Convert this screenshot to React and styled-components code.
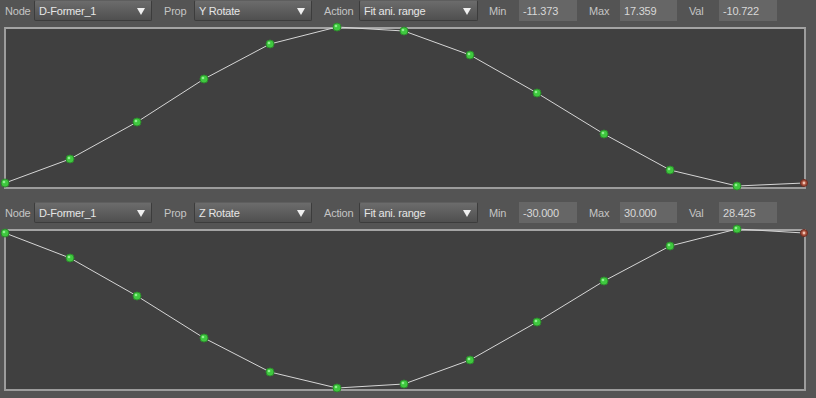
import React from "react";
import styled, { createGlobalStyle } from "styled-components";

const GlobalStyle = createGlobalStyle`
  html, body {
    margin: 0;
    padding: 0;
    background: #545454;
  }
  body {
    font-family: "Liberation Sans", Arial, sans-serif;
    font-size: 11px;
    color: #cfcfcf;
  }
`;

const Page = styled.div`
  width: 816px;
  height: 398px;
  overflow: hidden;
  background: #545454;
`;

const Channel = styled.section`
  display: flex;
  flex-direction: column;
  margin-bottom: 13px;
`;

const Toolbar = styled.div`
  display: flex;
  align-items: stretch;
  height: 22px;
  padding-left: 0;
  margin-bottom: 5px;
`;

const Field = styled.div`
  display: flex;
  align-items: stretch;
  background: ${(p) => (p.$boxed ? "#585858" : "transparent")};
`;

const Label = styled.span`
  display: flex;
  align-items: center;
  box-sizing: border-box;
  width: ${(p) => p.$w}px;
  padding-left: ${(p) => p.$pad}px;
  color: #c4c4c4;
  letter-spacing: -0.2px;
  white-space: nowrap;
`;

const Select = styled.div`
  display: flex;
  align-items: center;
  justify-content: space-between;
  box-sizing: border-box;
  width: ${(p) => p.$w}px;
  height: 21px;
  padding: 0 6px 0 4px;
  border: 1px solid #3c3c3c;
  border-top-color: #5e5e5e;
  border-radius: 2px;
  background: linear-gradient(#6c6c6c, #4f4f4f);
  color: #e6e6e6;
  letter-spacing: -0.2px;
`;

const Arrow = styled.span`
  width: 0;
  height: 0;
  border-left: 4px solid transparent;
  border-right: 4px solid transparent;
  border-top: 7px solid #f0f0f0;
  margin-top: 1px;
`;

const NumBox = styled.div`
  display: flex;
  align-items: center;
  box-sizing: border-box;
  width: ${(p) => p.$w}px;
  height: 21px;
  padding-left: 4px;
  background: #666666;
  color: #d8d8d8;
  letter-spacing: -0.2px;
`;

const Frame = styled.div`
  position: relative;
  box-sizing: border-box;
  width: 802px;
  height: 162px;
  margin-left: 4px;
  border: 2px solid #9c9c9c;
  border-top-color: #a4a4a4;
  background: #404040;
`;

const Plot = styled.svg`
  display: block;
  width: 100%;
  height: 100%;
  overflow: visible;
`;

const XS = [-1, 64, 131, 198, 264, 331, 398, 464, 531, 598, 664, 731, 798];

const channels = [
  {
    prop: "Y Rotate",
    min: "-11.373",
    max: "17.359",
    val: "-10.722",
    ys: [154, 130, 93, 50, 15, -2, 2, 26, 64, 105, 141, 157, 154],
  },
  {
    prop: "Z Rotate",
    min: "-30.000",
    max: "30.000",
    val: "28.425",
    ys: [2, 27, 65, 107, 141, 157, 153, 129, 91, 50, 15, -2, 2],
  },
];

const Curve = ({ ys }) => {
  const pts = XS.map((x, i) => [x, ys[i]]);
  const last = pts.length - 1;
  return (
    <Plot>
      <polyline
        points={pts.map((p) => p.join(",")).join(" ")}
        fill="none"
        stroke="#d6d6d6"
        strokeWidth="1"
      />
      {pts.map(([x, y], i) =>
        i === last ? (
          <g key={i}>
            <circle cx={x} cy={y} r="3.5" fill="#a8503c" stroke="#6a2a20" strokeWidth="1" />
            <circle cx={x} cy={y} r="1.4" fill="#f0c0b0" />
          </g>
        ) : (
          <g key={i}>
            <circle cx={x} cy={y} r="4" fill="#3fc83f" stroke="#2c8a2c" strokeWidth="1" />
            <circle cx={x - 1} cy={y - 1} r="1.3" fill="#8ef08e" />
          </g>
        )
      )}
    </Plot>
  );
};

const ChannelView = ({ c }) => (
  <Channel>
    <Toolbar>
      <Field>
        <Label $w={34} $pad={5}>Node</Label>
        <Select $w={118}>
          D-Former_1
          <Arrow />
        </Select>
      </Field>
      <Field>
        <Label $w={42} $pad={12}>Prop</Label>
        <Select $w={118}>
          {c.prop}
          <Arrow />
        </Select>
      </Field>
      <Field>
        <Label $w={47} $pad={12}>Action</Label>
        <Select $w={119}>
          Fit ani. range
          <Arrow />
        </Select>
      </Field>
      <Field>
        <Label $w={41} $pad={11}>Min</Label>
        <NumBox $w={58}>{c.min}</NumBox>
      </Field>
      <Field>
        <Label $w={43} $pad={12}>Max</Label>
        <NumBox $w={57}>{c.max}</NumBox>
      </Field>
      <Field>
        <Label $w={42} $pad={12}>Val</Label>
        <NumBox $w={58}>{c.val}</NumBox>
      </Field>
    </Toolbar>
    <Frame>
      <Curve ys={c.ys} />
    </Frame>
  </Channel>
);

export default function App() {
  return (
    <Page>
      <GlobalStyle />
      {channels.map((c) => (
        <ChannelView key={c.prop} c={c} />
      ))}
    </Page>
  );
}
